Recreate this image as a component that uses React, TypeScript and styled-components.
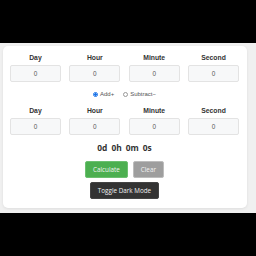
import { useState } from "react";
import styled, { createGlobalStyle } from "styled-components";

const GlobalStyle = createGlobalStyle`
  html, body {
    margin: 0;
    padding: 0;
    background: #000;
    font-family: "Liberation Sans", Arial, sans-serif;
    -webkit-font-smoothing: antialiased;
  }
`;

const units = ["Day", "Hour", "Minute", "Second"];

function TimeRow() {
  return (
    <Row>
      {units.map((u) => (
        <Field key={u}>
          <Label>{u}</Label>
          <Input type="text" defaultValue="0" />
        </Field>
      ))}
    </Row>
  );
}

function App() {
  const [mode, setMode] = useState("add");

  return (
    <>
      <GlobalStyle />
      <Page>
        <Card>
          <TimeRow />
          <RadioRow>
            <RadioLabel>
              <Radio
                type="radio"
                name="op"
                checked={mode === "add"}
                onChange={() => setMode("add")}
              />
              Add+
            </RadioLabel>
            <RadioLabel>
              <Radio
                type="radio"
                name="op"
                checked={mode === "sub"}
                onChange={() => setMode("sub")}
              />
              Subtract−
            </RadioLabel>
          </RadioRow>
          <TimeRow />
          <Result>
            <span>0d</span>
            <span>0h</span>
            <span>0m</span>
            <span>0s</span>
          </Result>
          <Buttons>
            <Button $bg="#4caf50" $border="#6cc070">Calculate</Button>
            <Button $bg="#9e9e9e" $border="#bdbdbd">Clear</Button>
          </Buttons>
          <Buttons>
            <Button $bg="#333" $border="#444">Toggle Dark Mode</Button>
          </Buttons>
        </Card>
      </Page>
    </>
  );
}

export default App;

const Page = styled.div`
  margin-top: 43px;
  height: 170px;
  box-sizing: border-box;
  background: #f0f0f0;
  padding: 3px 9px 5px 3px;
`;

const Card = styled.div`
  background: #fff;
  border-radius: 5px;
  box-shadow: 0 1px 3px rgba(0, 0, 0, 0.08);
  padding: 8px 8px 8px 7px;
  height: 162px;
  box-sizing: border-box;
  display: flex;
  flex-direction: column;
`;

const Row = styled.div`
  display: grid;
  grid-template-columns: repeat(4, 1fr);
  column-gap: 8.5px;
`;

const Field = styled.div`
  display: flex;
  flex-direction: column;
  align-items: center;
`;

const Label = styled.div`
  font-size: 6.8px;
  line-height: 8px;
  font-weight: bold;
  color: #333;
  margin-bottom: 3px;
`;

const Input = styled.input`
  width: 100%;
  height: 17px;
  box-sizing: border-box;
  border: 1px solid #e3e3e3;
  border-radius: 2px;
  background: #f7f8f9;
  text-align: center;
  font-family: "Liberation Sans", Arial, sans-serif;
  font-size: 6.4px;
  color: #555;
  padding: 0;
  outline: none;
`;

const RadioRow = styled.div`
  display: flex;
  justify-content: center;
  gap: 9px;
  margin: 8px 0 9px;
  height: 8px;
  align-items: center;
`;

const RadioLabel = styled.label`
  display: flex;
  align-items: center;
  gap: 2px;
  font-size: 6px;
  color: #555;
`;

const Radio = styled.input`
  appearance: none;
  margin: 0;
  width: 5px;
  height: 5px;
  border-radius: 50%;
  border: 0.7px solid #999;
  box-sizing: border-box;
  background: #fff;

  &:checked {
    border-color: #1a73e8;
    background: radial-gradient(circle, #1a73e8 55%, #fff 60%);
  }
`;

const Result = styled.div`
  display: flex;
  justify-content: center;
  gap: 4px;
  margin-top: 8px;
  font-family: "Open Sans", sans-serif;
  font-weight: bold;
  font-size: 8.4px;
  line-height: 10px;
  color: #333;
`;

const Buttons = styled.div`
  display: flex;
  justify-content: center;
  gap: 5px;
  margin-top: 8px;

  & + & {
    margin-top: 4px;
  }
`;

const Button = styled.button<{ $bg: string; $border: string }>`
  height: 17px;
  padding: 0 7px;
  border-radius: 2px;
  border: 1px solid ${(p) => p.$border};
  background: ${(p) => p.$bg};
  color: #f2f2f2;
  font-family: "Open Sans", sans-serif;
  font-size: 6.3px;
  cursor: pointer;
`;
